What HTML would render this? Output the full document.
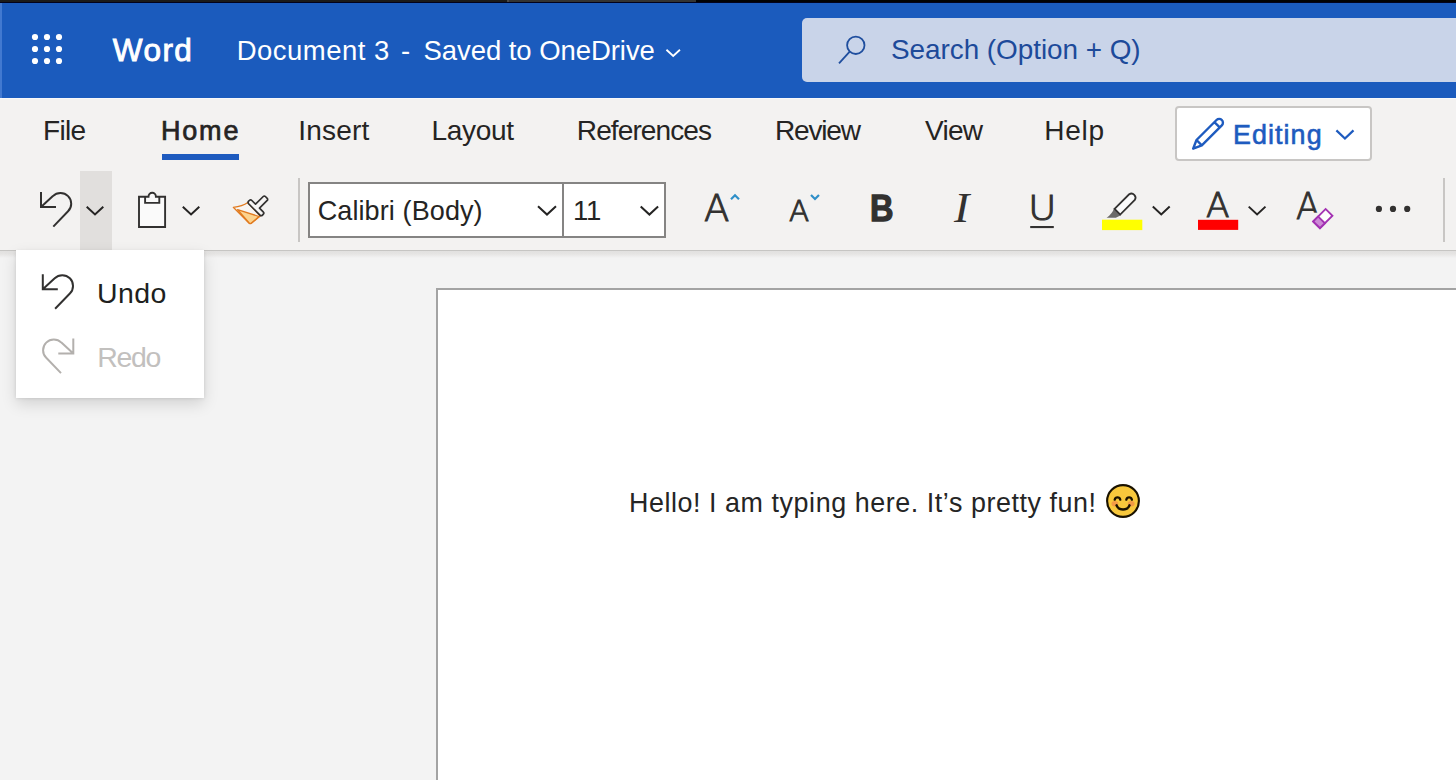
<!DOCTYPE html>
<html lang="en">
<head>
<meta charset="utf-8">
<title>Document 3 - Word</title>
<style>
html,body{margin:0;padding:0;}
body{width:1456px;height:780px;overflow:hidden;position:relative;background:#f3f3f3;font-family:"Liberation Sans",sans-serif;}
.abs{position:absolute;}
.t{position:absolute;white-space:pre;font-family:"Liberation Sans",sans-serif;}
#topstrip{left:0;top:0;width:1456px;height:3px;background:linear-gradient(#02021c,#02021c) 0 2px/1456px 1px no-repeat,linear-gradient(90deg,#1b1b1a 0,#1b1b1a 507px,#4a4a49 507px,#4a4a49 509px,#343432 509px,#343432 696px,#020202 696px);}
#header{left:0;top:3px;width:1456px;height:95px;background:#1b5bbd;}
#headeredge{left:0;top:98px;width:1456px;height:1px;background:#f8f8fa;z-index:1;}
#leftstripe{left:0;top:3px;width:2px;height:95px;background:#4279d0;}
#searchbox{left:802px;top:18px;width:700px;height:64px;border-radius:5px;background:#c9d4e9;}
#ribbon{left:0;top:98px;width:1456px;height:152px;background:#f3f2f1;}
#ribbonline{left:0;top:250px;width:1456px;height:1px;background:#c6c5c3;}
#ribbonshadow{left:0;top:251px;width:1456px;height:7px;background:linear-gradient(#e2e1e0,#e5e4e3 40%,#f3f3f3);}
#homeul{left:162px;top:154px;width:77px;height:6px;background:#1e5bbf;}
#editbtn{left:1175px;top:106px;width:192.5px;height:50.5px;border:2px solid #c8c6c4;border-radius:4px;background:#fff;}
#undodd{left:80px;top:170.5px;width:32px;height:79.5px;background:#e1dfdd;}
#sep1{left:298px;top:178px;width:2px;height:64px;background:#c8c6c4;}
#sep2{left:1442.5px;top:178px;width:2px;height:64px;background:#c8c6c4;}
#fontbox{left:308px;top:182px;width:254px;height:51.6px;border:2px solid #858483;background:#fff;}
#sizebox{left:562px;top:182px;width:100px;height:51.6px;border:2px solid #858483;background:#fff;}
#menu{left:16px;top:250px;width:188px;height:148px;background:#fff;box-shadow:0 6.4px 14.4px rgba(0,0,0,0.132),0 1.2px 3.6px rgba(0,0,0,0.108);}
#page{left:436px;top:288px;width:1100px;height:600px;background:#fff;border:2px solid #a3a3a3;}
#icons{left:0;top:0;width:1456px;height:780px;}
</style>
</head>
<body>
<header>
<div class="abs" id="topstrip"></div>
<div class="abs" id="header"></div>
<div class="abs" id="leftstripe"></div>
<div class="abs" id="searchbox"></div>
<div class="t" id="word" style="left:112.83px;top:34.50px;font-size:31.54px;line-height:31.54px;letter-spacing:1.413px;font-weight:normal;-webkit-text-stroke:0.9px #ffffff;color:#ffffff">Word</div>
<div class="t" id="doc" style="left:236.78px;top:36.60px;font-size:27.47px;line-height:27.47px;letter-spacing:0.49px;font-weight:normal;color:#ffffff">Document 3</div>
<div class="t" id="dash" style="left:401.11px;top:36.60px;font-size:27.47px;line-height:27.47px;letter-spacing:0.0px;font-weight:normal;color:#ffffff">-</div>
<div class="t" id="saved" style="left:423.49px;top:36.60px;font-size:27.47px;line-height:27.47px;letter-spacing:-0.044px;font-weight:normal;color:#ffffff">Saved to OneDrive</div>
<div class="t" id="search" style="left:890.98px;top:35.62px;font-size:27.91px;line-height:27.91px;letter-spacing:-0.044px;font-weight:normal;color:#1d4a9a">Search (Option + Q)</div>
</header>
<nav>
<div class="abs" id="ribbon"></div>
<div class="abs" id="headeredge"></div>
<div class="abs" id="homeul"></div>
<div class="abs" id="editbtn"></div>
<div class="t" id="file" style="left:43.04px;top:116.71px;font-size:28.05px;line-height:28.05px;letter-spacing:-0.715px;font-weight:normal;color:#252423">File</div>
<div class="t" id="home" style="left:160.90px;top:117.72px;font-size:27.03px;line-height:27.03px;letter-spacing:1.82px;font-weight:normal;-webkit-text-stroke:0.7px #252423;color:#252423">Home</div>
<div class="t" id="insert" style="left:298.17px;top:116.71px;font-size:28.05px;line-height:28.05px;letter-spacing:0.185px;font-weight:normal;color:#252423">Insert</div>
<div class="t" id="layout" style="left:431.44px;top:116.71px;font-size:28.05px;line-height:28.05px;letter-spacing:-0.298px;font-weight:normal;color:#252423">Layout</div>
<div class="t" id="refs" style="left:576.84px;top:116.71px;font-size:28.05px;line-height:28.05px;letter-spacing:-0.913px;font-weight:normal;color:#252423">References</div>
<div class="t" id="review" style="left:774.94px;top:116.71px;font-size:28.05px;line-height:28.05px;letter-spacing:-1.177px;font-weight:normal;color:#252423">Review</div>
<div class="t" id="view" style="left:925.01px;top:116.71px;font-size:28.05px;line-height:28.05px;letter-spacing:-0.778px;font-weight:normal;color:#252423">View</div>
<div class="t" id="help" style="left:1044.14px;top:116.71px;font-size:28.05px;line-height:28.05px;letter-spacing:0.792px;font-weight:normal;color:#252423">Help</div>
<div class="t" id="editing" style="left:1232.98px;top:121.64px;font-size:26.89px;line-height:26.89px;letter-spacing:1.073px;font-weight:normal;-webkit-text-stroke:0.6px #1e5bbf;color:#1e5bbf">Editing</div>
</nav>
<section id="toolbar">
<div class="abs" id="ribbonline"></div>
<div class="abs" id="ribbonshadow"></div>
<div class="abs" id="undodd"></div>
<div class="abs" id="sep1"></div>
<div class="abs" id="sep2"></div>
<div class="abs" id="fontbox"></div>
<div class="abs" id="sizebox"></div>
<div class="t" id="calibri" style="left:317.66px;top:197.52px;font-size:27.03px;line-height:27.03px;letter-spacing:0.102px;font-weight:normal;color:#252423">Calibri (Body)</div>
<div class="t" id="eleven" style="left:573.00px;top:196.72px;font-size:27.62px;line-height:27.62px;letter-spacing:-0.2px;font-weight:normal;color:#252423">11</div>
<div class="t" id="gA1" style="left:704.17px;top:190.43px;font-family:'DejaVu Sans', sans-serif;font-weight:200;font-style:normal;font-size:37.03px;line-height:37.03px;transform-origin:0 0;transform:scaleX(1.003);-webkit-text-stroke:1.0px #323130;color:#323130">A</div>
<div class="t" id="gA2" style="left:788.70px;top:198.23px;font-family:'DejaVu Sans', sans-serif;font-weight:200;font-style:normal;font-size:28.47px;line-height:28.47px;transform-origin:0 0;transform:scaleX(1.036);-webkit-text-stroke:1.0px #323130;color:#323130">A</div>
<div class="t" id="gB" style="left:870.17px;top:189.78px;font-family:'Liberation Sans', sans-serif;font-weight:bold;font-style:normal;font-size:37.78px;line-height:37.78px;transform-origin:0 0;transform:scaleX(0.862);-webkit-text-stroke:1.3px #323130;color:#323130">B</div>
<div class="t" id="gI" style="left:953.67px;top:187.00px;font-family:'Liberation Serif', serif;font-weight:400;font-style:italic;font-size:42.78px;line-height:42.78px;transform-origin:0 0;transform:scaleX(1.077);color:#323130">I</div>
<div class="t" id="gU" style="left:1027.64px;top:190.53px;font-family:'DejaVu Sans', sans-serif;font-weight:200;font-style:normal;font-size:34.53px;line-height:34.53px;transform-origin:0 0;transform:scaleX(1.129);-webkit-text-stroke:1.0px #323130;color:#323130">U</div>
<div class="t" id="gA3" style="left:1206.23px;top:189.13px;font-family:'DejaVu Sans', sans-serif;font-weight:200;font-style:normal;font-size:33.94px;line-height:33.94px;transform-origin:0 0;transform:scaleX(1.015);-webkit-text-stroke:1.0px #323130;color:#323130">A</div>
<div class="t" id="gA4" style="left:1295.61px;top:188.33px;font-family:'DejaVu Sans', sans-serif;font-weight:200;font-style:normal;font-size:37.64px;line-height:37.64px;transform-origin:0 0;transform:scaleX(0.931);-webkit-text-stroke:1.0px #323130;color:#323130">A</div>

</section>
<main>
<div class="abs" id="page"></div>
<div class="t" id="hello" style="left:628.91px;top:489.64px;font-size:26.89px;line-height:26.89px;letter-spacing:0.563px;font-weight:normal;color:#252525">Hello! I am typing here. It’s pretty fun!</div>
</main>
<section id="undomenu">
<div class="abs" id="menu"></div>
<div class="t" id="undo" style="left:96.91px;top:278.63px;font-size:28.49px;line-height:28.49px;letter-spacing:0.458px;font-weight:normal;color:#201f1e">Undo</div>
<div class="t" id="redo" style="left:97.31px;top:342.53px;font-size:28.49px;line-height:28.49px;letter-spacing:-1.342px;font-weight:normal;color:#c2c0be">Redo</div>
</section>
<svg class="abs" id="icons" width="1456" height="780" viewBox="0 0 1456 780" fill="none">
<!-- waffle -->
<g fill="#ffffff">
<circle cx="35" cy="37" r="3.1"/><circle cx="47" cy="37" r="3.1"/><circle cx="59" cy="37" r="3.1"/>
<circle cx="35" cy="49" r="3.1"/><circle cx="47" cy="49" r="3.1"/><circle cx="59" cy="49" r="3.1"/>
<circle cx="35" cy="61" r="3.1"/><circle cx="47" cy="61" r="3.1"/><circle cx="59" cy="61" r="3.1"/>
</g>
<!-- title chevron -->
<path d="M666.44,49.74 L673.20,56.03 L679.96,49.74" stroke="#ffffff" stroke-width="1.8"/>
<!-- search icon -->
<g stroke="#1f4e9e" stroke-width="1.8">
<circle cx="855.8" cy="45.3" r="8.7"/>
<path d="M849.7,51.6 L839,63.4"/>
</g>
<!-- pencil -->
<g transform="translate(1192.3,149.5) rotate(-45)" stroke="#1e5bbf" stroke-width="2.4" stroke-linejoin="round">
<path d="M1.2,0 L9.7,-3.75 L38,-3.75 A3.75,3.75 0 0 1 38,3.75 L9.7,3.75 Z M9.7,-3.75 V3.75 M35,-3.75 V3.75"/>
</g>
<!-- editing chevron -->
<path d="M1336.4,130.4 L1344.95,138.5 L1353.5,130.4" stroke="#1e5bbf" stroke-width="2.2"/>
<!-- undo (toolbar) -->
<g id="undoicon" stroke="#323130" stroke-width="2">
<path d="M41,192 V207 H56 M41,207 L52.9,196.1 A10.7,10.7 0 1 1 68.07,211.27 L53.3,226.6"/>
</g>
<!-- undo dropdown chevron -->
<path d="M86.71,206.71 L95.00,214.39 L103.29,206.71" stroke="#252423" stroke-width="2"/>
<!-- clipboard -->
<g stroke="#323130" stroke-width="1.9" stroke-linejoin="miter">
<path d="M148.5,196.8 H139 V226.95 H165.1 V196.8 H155.9 A3.7,4 0 0 0 148.5,196.8 Z" fill="#fafafa"/>
<path d="M145.1,196.8 V202.9 H159.3 V196.8"/>
</g>
<path d="M182.81,206.71 L191.05,214.39 L199.29,206.71" stroke="#252423" stroke-width="2"/>
<!-- format painter -->
<g stroke-linejoin="round">
<path d="M247.8,202.5 Q242.5,206.3 233.3,207.3 L249.2,223.2 Q250.2,224 251.4,223.2 L260.2,216 Z" fill="#f7f5f3" stroke="#e17a1e" stroke-width="1.3"/>
<path d="M237.6,209.7 L259,216.5 L251.4,223 Q250.2,223.8 249.2,223 Z" fill="#fcd38e" stroke="#e17a1e" stroke-width="1.3"/>
<g transform="translate(255.9,207.8) rotate(-45)" stroke="#323130" stroke-width="1.7" fill="#f6f5f4">
<path d="M-2.3,-8 A1.8,1.8 0 0 1 -0.5,-9.8 H0.5 A1.8,1.8 0 0 1 2.3,-8 V-2.8 H13.2 A1.5,1.5 0 0 1 14.7,-1.3 V1.3 A1.5,1.5 0 0 1 13.2,2.8 H2.3 V8 A1.8,1.8 0 0 1 0.5,9.8 H-0.5 A1.8,1.8 0 0 1 -2.3,8 Z"/>
</g>
</g>
<!-- font chevrons -->
<path d="M538.01,206.31 L547.00,214.59 L555.99,206.31" stroke="#252423" stroke-width="2"/>
<path d="M640.71,206.41 L649.40,214.59 L658.09,206.41" stroke="#252423" stroke-width="2"/>
<!-- grow / shrink carets -->
<path d="M731,199.3 L735,195.3 L739,199.3" stroke="#2f8fc8" stroke-width="2.2"/>
<path d="M811,195 L815,199 L819,195" stroke="#2f8fc8" stroke-width="2.2"/>
<!-- underline bar -->
<rect x="1030.2" y="226" width="23.6" height="2.1" fill="#323130"/>
<!-- highlighter -->
<rect x="1102" y="219.7" width="40.3" height="10.4" fill="#ffff00"/>
<path d="M1114,208.2 Q1112.6,213.4 1106.6,217.8 L1115.9,217.8 L1120.8,215.2 Z" fill="#6b6a69"/>
<g transform="translate(1117.4,211.7) rotate(-45)" stroke="#323130" stroke-width="1.8">
<path d="M0,-4 H20.6 A4.2,4.1 0 0 1 20.6,4 H0 Z" fill="#fbfbfb"/>
</g>
<path d="M1152.81,206.61 L1161.25,214.39 L1169.69,206.61" stroke="#252423" stroke-width="2"/>
<!-- font colour -->
<rect x="1198" y="219.8" width="40.2" height="10.1" fill="#ff0000"/>
<path d="M1248.71,206.61 L1257.10,214.39 L1265.49,206.61" stroke="#252423" stroke-width="2"/>
<!-- clear formatting eraser -->
<rect x="1311.5" y="212.7" width="12" height="10" fill="#f3f2f1"/>
<g transform="translate(1322.8,218.6) rotate(-45)">
<rect x="-10.6" y="-6.6" width="21.2" height="13.2" fill="#f3f2f1"/>
<rect x="-8.8" y="-4.8" width="17.6" height="9.6" fill="#fdfdfd" stroke="#a231b2" stroke-width="1.9"/>
<rect x="-8.8" y="-4.8" width="7" height="9.6" fill="#cc8ad6" stroke="#a231b2" stroke-width="1.9"/>
</g>
<!-- more dots -->
<g fill="#323130"><circle cx="1378.9" cy="208.9" r="3.1"/><circle cx="1393" cy="208.9" r="3.1"/><circle cx="1407.2" cy="208.9" r="3.1"/></g>
<!-- menu undo / redo -->
<g transform="translate(1.8,82.2)" stroke="#323130" stroke-width="2">
<path d="M41,192 V207 H56 M41,207 L52.9,196.1 A10.7,10.7 0 1 1 68.07,211.27 L53.3,226.6"/>
</g>
<g transform="translate(114.3,146.5) scale(-1,1)" stroke="#b3b0ad" stroke-width="2">
<path d="M41,192 V207 H56 M41,207 L52.9,196.1 A10.7,10.7 0 1 1 68.07,211.27 L53.3,226.6"/>
</g>
<!-- emoji -->
<g>
<circle cx="1123" cy="501" r="15.9" fill="#f8c83c" stroke="#1a1200" stroke-width="2.1"/>
<ellipse cx="1114.9" cy="503.8" rx="3.4" ry="2.7" fill="#f39a45"/>
<ellipse cx="1131.2" cy="503.8" rx="3.4" ry="2.7" fill="#f39a45"/>
<path d="M1114.7,499.7 A2.9,3.1 0 0 1 1120.3,499.7 M1126.3,499.7 A2.9,3.1 0 0 1 1131.9,499.7" stroke="#1a1200" stroke-width="2.3" stroke-linecap="round"/>
<path d="M1116.6,505.4 C1118.6,510.9 1127.5,510.9 1129.5,505.4" stroke="#1a1200" stroke-width="2.5" stroke-linecap="round"/>
</g>

</svg>
</body>
</html>
